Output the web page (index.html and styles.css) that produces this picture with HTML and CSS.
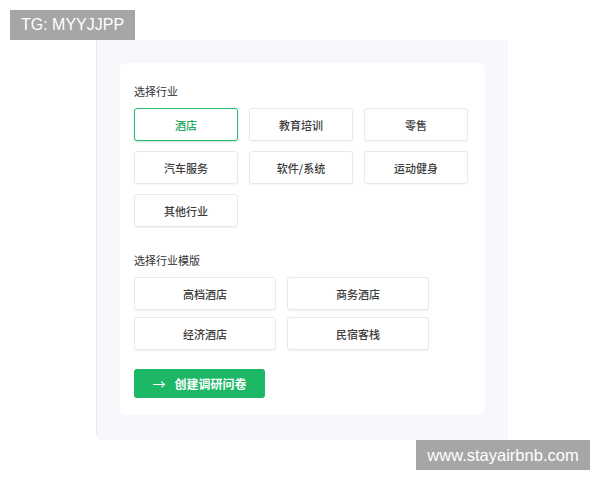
FILE: index.html
```html
<!DOCTYPE html>
<html lang="zh">
<head>
<meta charset="utf-8">
<link rel="stylesheet" href="styles.css">
</head>
<body>
<div class="tag tag-tl">TG: MYYJJPP</div>
<div class="panel">
  <div class="card">
    <div class="label">选择行业</div>
    <div class="grid3">
      <div class="opt active">酒店</div>
      <div class="opt">教育培训</div>
      <div class="opt">零售</div>
      <div class="opt">汽车服务</div>
      <div class="opt">软件/系统</div>
      <div class="opt">运动健身</div>
      <div class="opt">其他行业</div>
    </div>
    <div class="label label2">选择行业模版</div>
    <div class="grid2">
      <div class="opt">高档酒店</div>
      <div class="opt">商务酒店</div>
      <div class="opt">经济酒店</div>
      <div class="opt">民宿客栈</div>
    </div>
    <button class="create"><span class="arrow">→</span>创建调研问卷</button>
  </div>
</div>
<div class="tag tag-br">www.stayairbnb.com</div>
</body>
</html>
```
FILE: styles.css
```css
html, body {
  margin: 0;
  padding: 0;
  background: #ffffff;
  font-family: "Noto Sans CJK SC", "Noto Sans", sans-serif;
}
body {
  width: 600px;
  height: 480px;
  position: relative;
  overflow: hidden;
}
.tag {
  position: absolute;
  background: #a6a6a6;
  color: #ffffff;
  font-family: "Liberation Sans", Arial, sans-serif;
  font-size: 16px;
  display: flex;
  align-items: center;
  justify-content: center;
  height: 30px;
}
.tag-tl {
  left: 10px;
  top: 10px;
  width: 125px;
}
.tag-br {
  left: 416px;
  top: 440px;
  width: 174px;
  font-size: 16.5px;
}
.panel {
  margin: 40px 0 0 96px;
  width: 412px;
  height: 400px;
  box-sizing: border-box;
  background: #f7f8fc;
  border-left: 1px solid #e4e6ec;
  border-radius: 0 0 0 8px;
  padding: 23px 23px 0 23px;
}
.card {
  background: #ffffff;
  border-radius: 6px;
  width: 365px;
  height: 352px;
  box-sizing: border-box;
  padding: 21px 14px 0 14px;
}
.label {
  font-size: 11px;
  line-height: 14px;
  color: #333333;
  margin-bottom: 10px;
}
.label2 {
  margin-top: 26px;
  margin-bottom: 10px;
}
.grid3 {
  display: grid;
  grid-template-columns: repeat(3, 104px);
  grid-auto-rows: 33px;
  column-gap: 11px;
  row-gap: 10px;
}
.grid2 {
  display: grid;
  grid-template-columns: repeat(2, 142px);
  grid-auto-rows: 33px;
  column-gap: 11px;
  row-gap: 7px;
}
.opt {
  box-sizing: border-box;
  border: 1px solid #e2ece8;
  border-radius: 3px;
  box-shadow: 0 1px 2px rgba(0, 60, 40, 0.06);
  display: flex;
  align-items: center;
  justify-content: center;
  font-size: 11px;
  font-weight: 500;
  color: #3c3c3c;
  background: #ffffff;
}
.opt.active {
  border: 1.5px solid #2dbb72;
  color: #25a560;
  box-shadow: 0 1px 2px rgba(30, 140, 80, 0.25);
}
.create {
  margin-top: 19px;
  width: 131px;
  height: 29px;
  border: none;
  border-radius: 3px;
  background: #1db865;
  color: #ffffff;
  font-family: "Noto Sans CJK SC", sans-serif;
  font-size: 12px;
  font-weight: bold;
  display: flex;
  align-items: center;
  justify-content: center;
  padding: 0;
}
.arrow {
  font-weight: normal;
  font-size: 13px;
  margin-right: 9px;
}
```
